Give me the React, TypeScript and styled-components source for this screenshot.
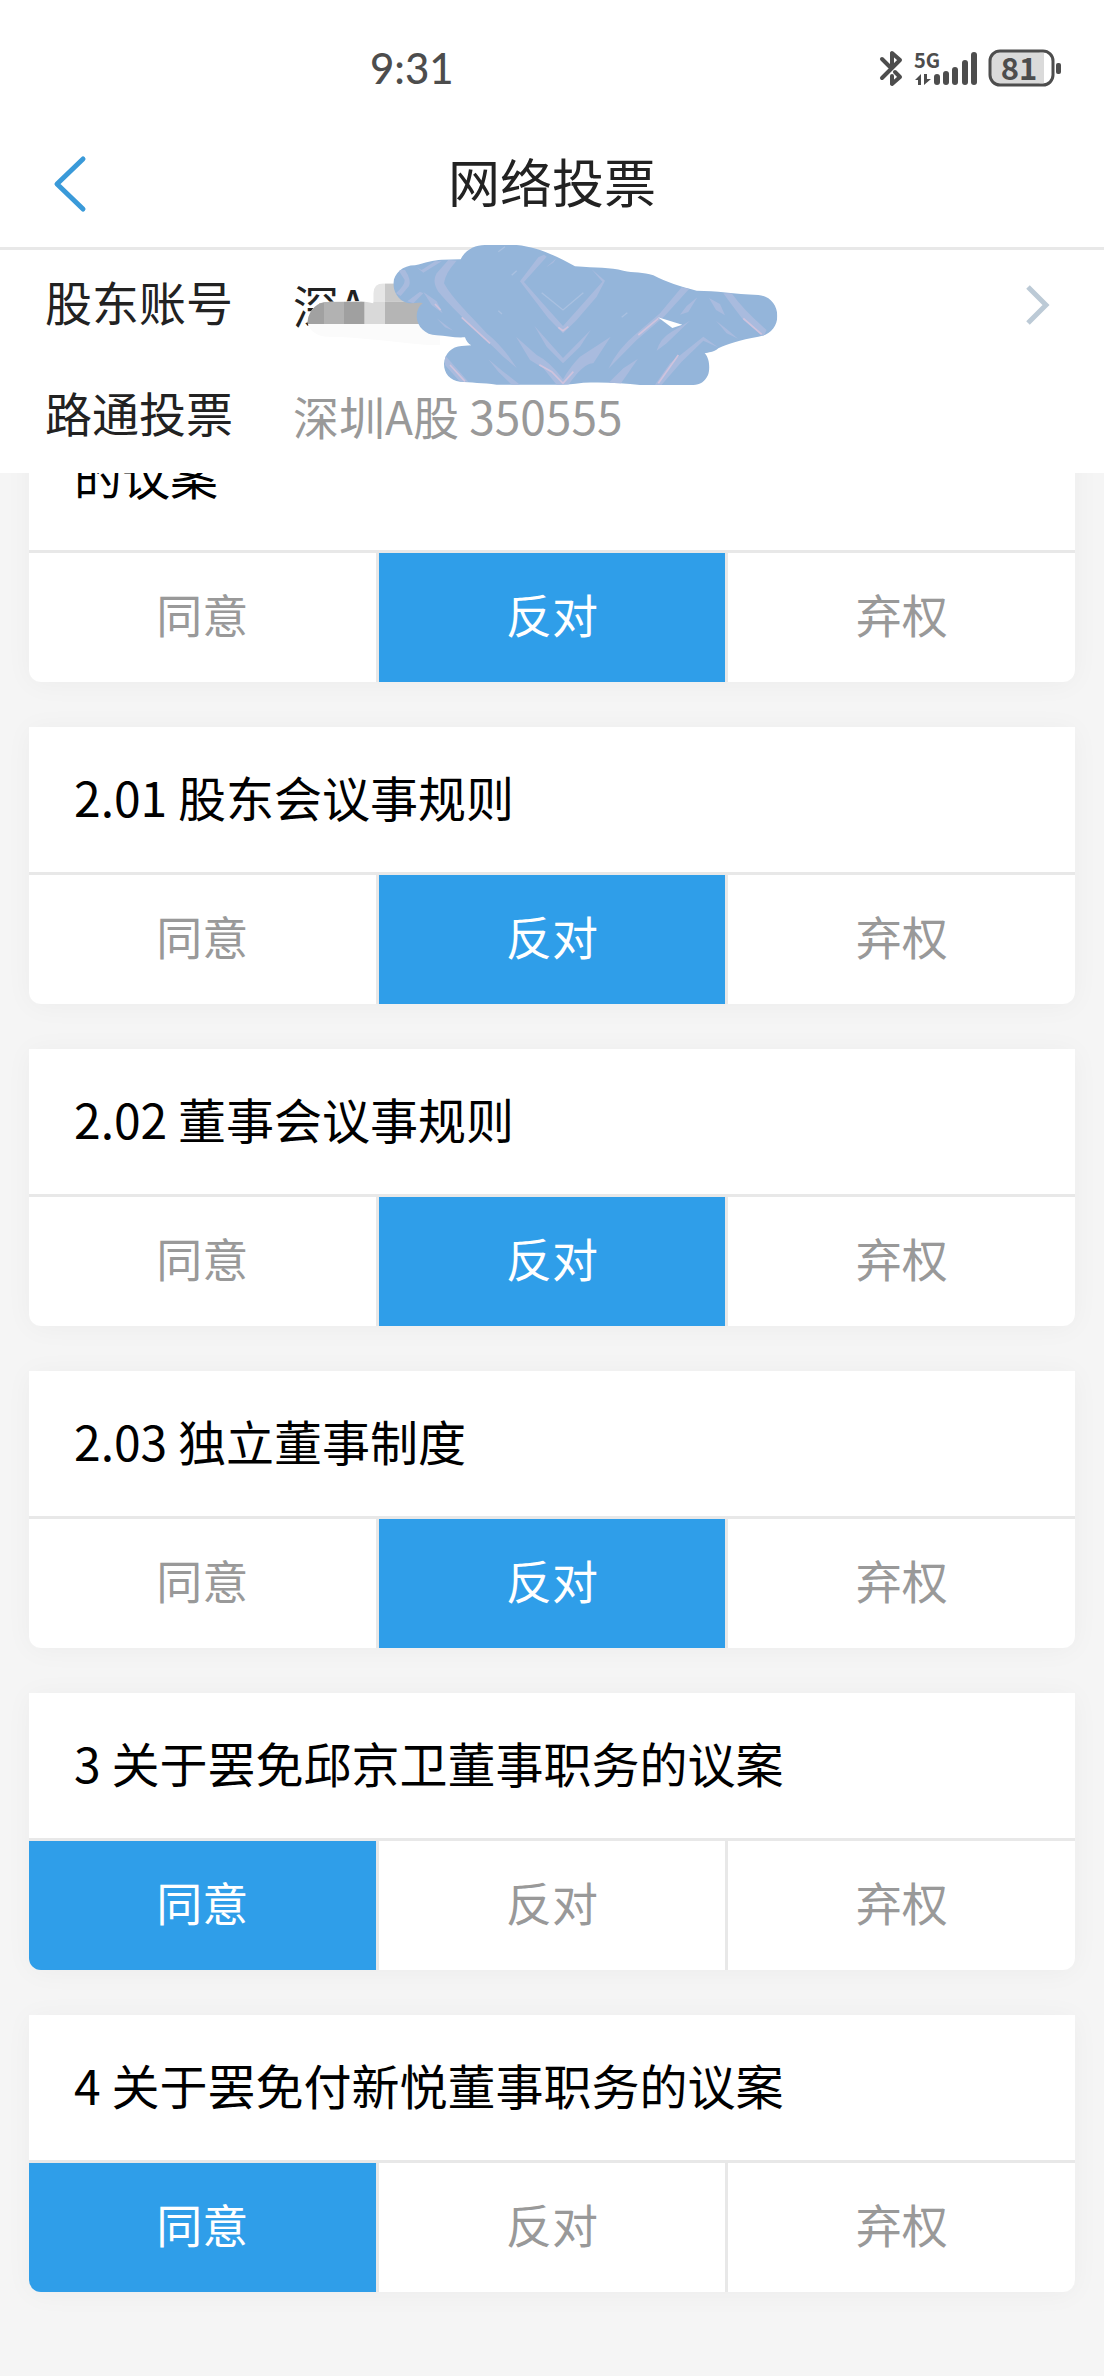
import { useState } from "react";
import styled, { createGlobalStyle } from "styled-components";

const GlobalStyle = createGlobalStyle`
  *, *::before, *::after { box-sizing: border-box; }
  body {
    margin: 0;
    background: #f5f5f5;
    color: #222;
    font-family: "Noto Sans CJK SC", "Noto Sans", sans-serif;
  }
  button { font-family: inherit; }
`;

const Page = styled.div`
  min-height: 100vh;
  padding-bottom: 84px;
`;

const Top = styled.header`
  position: sticky;
  top: 0;
  z-index: 1;
  background: #fff;
`;

const StatusBar = styled.div`
  display: flex;
  align-items: center;
  justify-content: space-between;
  height: 120px;
  padding: 16px 42px 0 370px;
  color: #4d4d4d;
`;

const Clock = styled.time`
  font-family: Lato, "Noto Sans", sans-serif;
  font-size: 42px;
  line-height: 48px;
  font-weight: 500;
`;

const StatusIcons = styled.div`
  display: flex;
  align-items: center;
  gap: 11px;
`;

const NavBar = styled.nav`
  display: grid;
  grid-template-columns: 140px 1fr 140px;
  align-items: center;
  height: 130px;
  border-bottom: 3px solid #e8e8e8;
`;

const BackButton = styled.button`
  display: flex;
  align-items: center;
  height: 100%;
  padding: 0 0 0 53px;
  border: 0;
  background: none;
`;

const Title = styled.h1`
  margin: 0;
  padding-bottom: 6px;
  font-size: 52px;
  line-height: 72px;
  font-weight: 400;
  text-align: center;
`;

const AccountPanel = styled.section`
  position: relative;
  padding-bottom: 1px;
`;

const AccountRow = styled.div`
  display: grid;
  grid-template-columns: 248px 1fr auto;
  align-items: center;
  width: 100%;
  height: 111px;
  padding: 0 54px 2px 45px;
  border: 0;
  background: none;
  color: #222;
  text-align: left;
  font-size: 47px;
  line-height: 72px;
`;

const Label = styled.span`
  padding-bottom: 8px;
`;

const Value = styled.span<{ $muted?: boolean }>`
  padding-bottom: 2px;
  font-size: 46px;
  color: ${(p) => (p.$muted ? "#999" : "#222")};
`;

const Redaction = styled.svg`
  position: absolute;
  top: -10px;
  left: 300px;
  pointer-events: none;
`;

const List = styled.main`
  display: flex;
  flex-direction: column;
  gap: 45px;
  margin-top: -68px;
  padding: 0 29px;
`;

const Card = styled.section`
  overflow: hidden;
  border-radius: 0 0 12px 12px;
  background: #fff;
  box-shadow: 0 2px 28px rgba(0, 0, 0, 0.04);
`;

const Proposal = styled.h2`
  margin: 0;
  padding: 33px 45px 40px;
  color: #000;
  font-size: 48px;
  line-height: 72px;
  font-weight: 400;
`;

const Choices = styled.div`
  display: grid;
  grid-template-columns: repeat(3, 1fr);
  gap: 3px;
  padding-top: 3px;
  background: #e8e8e8;
`;

const Choice = styled.button<{ $active: boolean }>`
  height: 129px;
  padding: 0 0 10px;
  border: 0;
  background: ${(p) => (p.$active ? "#2f9ee9" : "#fff")};
  color: ${(p) => (p.$active ? "#fff" : "#999")};
  font-size: 46px;
  line-height: 72px;
`;

const options = ["同意", "反对", "弃权"];

const proposals = [
  { title: "的议案", vote: 1 },
  { title: "2.01 股东会议事规则", vote: 1 },
  { title: "2.02 董事会议事规则", vote: 1 },
  { title: "2.03 独立董事制度", vote: 1 },
  { title: "3 关于罢免邱京卫董事职务的议案", vote: 0 },
  { title: "4 关于罢免付新悦董事职务的议案", vote: 0 },
];

function Bluetooth() {
  return (
    <svg width="24" height="38" viewBox="878 48 24 38" fill="none" stroke="#4d4d4d" strokeWidth="4" strokeLinecap="round" strokeLinejoin="round">
      <path d="M881 77 L899 59 L891 52 V66 M881 58 L890 67 M894 71 L899 76 L891 83 V75" />
    </svg>
  );
}

function Signal() {
  const bars = [
    [932, 73],
    [941, 70],
    [950, 66],
    [960, 59],
    [969, 51],
  ];
  return (
    <svg width="63" height="58" viewBox="912 38 63 58" fill="#4d4d4d">
      <text x="912" y="67" fontSize="20" fontWeight="700">5G</text>
      {bars.map(([x, y]) => (
        <rect key={x} x={x} y={y} width="6" height={84 - y} rx="3" />
      ))}
      <path d="M913 79 L919 73 V84 H916 V79 Z M922 73 H925 V78 H929 L922 84 Z" />
    </svg>
  );
}

function Battery() {
  return (
    <svg width="74" height="58" viewBox="987 38 74 58">
      <rect x="989" y="50" width="54" height="34" rx="9" fill="#dadada" />
      <rect x="1036" y="52" width="7" height="30" fill="#dadada" />
      <rect x="989" y="50" width="63" height="34" rx="10" fill="none" stroke="#4d4d4d" strokeWidth="3" />
      <rect x="1055" y="62" width="5" height="11" rx="2" fill="#4d4d4d" />
      <text x="1018" y="79" fontSize="31" fontWeight="700" fill="#4d4d4d" textAnchor="middle">81</text>
    </svg>
  );
}

function AccountMask() {
  return (
    <Redaction width="490" height="150" viewBox="300 240 490 150" aria-hidden="true">
      <defs>
        <clipPath id="mosaic">
          <path d="M922 245 C928 205 955 185 985 185 L1085 183 L1120 190 V160 Q1122 130 1150 130 H1240 L1320 200 V316 C1200 312 1100 290 980 290 Q930 285 922 245 Z" />
        </clipPath>
        <clipPath id="scribble">
          <path d="M70 160 C72 130 98 106 135 106 C165 98 190 90 215 89 L272 88 C285 60 315 45 345 45 H440 C500 50 560 78 615 109 C680 114 720 112 760 122 C790 130 820 124 850 136 C890 156 930 170 980 182 C1040 182 1090 192 1165 195 C1200 198 1222 225 1222 258 C1222 290 1200 316 1165 320 C1110 330 1070 342 1045 355 C1030 368 1015 367 1004 370 C1020 385 1020 420 1014 435 C1005 455 990 464 970 465 H810 C760 458 700 456 640 458 C600 464 560 465 520 464 H380 C340 458 300 458 270 455 C240 452 222 430 222 402 C224 370 245 350 275 348 L304 346 C295 342 288 332 285 322 C255 324 230 318 200 316 C165 314 142 290 140 260 C140 245 146 228 158 220 C145 216 130 222 110 218 C85 212 70 185 70 160 Z" />
        </clipPath>
      </defs>
      <g transform="translate(0 240) scale(0.33333)">
        <g clipPath="url(#mosaic)">
          <rect x="910" y="120" width="420" height="200" fill="#fbfbfb" />
          <rect x="1120" y="130" width="35" height="55" fill="#e6e6e6" />
          <rect x="1155" y="130" width="90" height="55" fill="#c9c9c9" />
          <rect x="910" y="185" width="62" height="67" fill="#a1a1a1" />
          <rect x="972" y="185" width="60" height="67" fill="#b2b2b2" />
          <rect x="1032" y="185" width="62" height="67" fill="#a0a0a0" />
          <rect x="1094" y="185" width="61" height="67" fill="#d9d9d9" />
          <rect x="1155" y="185" width="175" height="67" fill="#b5b5b5" />
        </g>
      </g>
      <g transform="translate(370 230) scale(0.33333)" clipPath="url(#scribble)">
        <rect x="60" y="40" width="1170" height="430" fill="#94b5da" />
        <g fill="#a9bbde">
          <path d="M235 90 L260 92 Q225 130 222 160 C250 210 300 255 350 310 Q400 350 440 414 L400 380 C340 320 260 250 205 185 Q185 155 200 130 Z" />
          <path d="M85 120 H105 Q125 150 117 168 L92 198 L78 190 Q105 165 104 150 Z" />
          <path d="M140 112 L155 120 L195 94 H215 L160 128 Z M112 214 L150 185 L160 190 L130 220 Z" />
          <path d="M160 186 L200 214 L218 250 L185 225 Z M200 265 L250 302 L225 292 Z" />
          <path d="M505 82 L522 74 L530 80 L462 156 L520 222 L579 288 L640 220 L697 155 L665 118 L705 152 L680 200 L620 270 L579 310 L535 265 L450 154 Z" />
          <path d="M528 112 L560 84 L550 98 Z M493 287 L579 384 L662 300 L630 350 L579 400 L530 350 Z" />
          <path d="M438 320 L500 375 Q540 395 579 448 Q600 410 630 380 L722 320 L670 400 Q640 400 596 464 H560 L520 415 L480 390 Z" />
          <path d="M935 172 L958 176 Q900 240 880 262 L800 330 L715 416 Q745 355 800 310 L870 250 Z" />
          <path d="M982 202 L955 246 L930 254 L950 228 Z M1017 204 L1050 222 L1065 256 L1038 240 Z" />
          <path d="M1060 190 H1085 Q1120 240 1190 300 L1180 320 L1120 270 Q1085 225 1060 190 Z" />
          <path d="M960 272 L890 340 L860 362 Q870 325 905 305 Z M1038 272 L1070 297 L1104 326 L1070 310 Z" />
          <path d="M355 388 L400 425 L450 464 H425 L385 425 Z M804 386 L750 464 H710 L760 415 Z" />
          <path d="M1000 320 L1044 352 L1000 332 L935 395 L875 464 H855 L900 400 Z M225 376 L295 455 H270 L225 405 Z" />
        </g>
        <g fill="none" stroke="#cfc3dd" strokeWidth="5">
          <path d="M275 262 L360 340 M240 405 L285 454 M1120 265 L1175 313 M865 265 L805 315 M925 375 L865 460" />
          <path d="M508 404 L545 425 L579 460 L610 425 M565 292 L579 302 L595 290 M195 222 L212 240" />
          <path d="M515 188 L579 240 L640 188 M385 65 L405 50 M425 136 L440 122 M385 242 L396 252 M755 262 L772 248" stroke="#a9c0e0" strokeWidth="4" />
        </g>
        <path d="M864 262 L937 284 L907 294 Z" fill="#fff" />
      </g>
    </Redaction>
  );
}

export default function App() {
  const [votes, setVotes] = useState(proposals.map((p) => p.vote));

  return (
    <>
      <GlobalStyle />
      <Page>
        <Top>
          <StatusBar>
            <Clock>9:31</Clock>
            <StatusIcons>
              <Bluetooth />
              <Signal />
              <Battery />
            </StatusIcons>
          </StatusBar>
          <NavBar>
            <BackButton aria-label="返回">
              <svg width="34" height="58" viewBox="0 0 34 58" fill="none" stroke="#3a9ad9" strokeWidth="5" strokeLinecap="round" strokeLinejoin="round">
                <path d="M30 4 L4 29 L30 54" />
              </svg>
            </BackButton>
            <Title>网络投票</Title>
          </NavBar>
          <AccountPanel>
            <AccountRow as="button">
              <Label>股东账号</Label>
              <Value>深A</Value>
              <svg width="24" height="42" viewBox="0 0 24 42" fill="none" stroke="#bccad6" strokeWidth="5">
                <path d="M2 3 L20 21 L2 39" />
              </svg>
            </AccountRow>
            <AccountRow>
              <Label>路通投票</Label>
              <Value $muted>深圳A股 350555</Value>
            </AccountRow>
            <AccountMask />
          </AccountPanel>
        </Top>
        <List>
          {proposals.map((proposal, row) => (
            <Card key={proposal.title}>
              <Proposal>{proposal.title}</Proposal>
              <Choices role="group" aria-label={proposal.title}>
                {options.map((option, i) => (
                  <Choice
                    key={option}
                    $active={votes[row] === i}
                    aria-pressed={votes[row] === i}
                    onClick={() => setVotes(votes.map((v, r) => (r === row ? i : v)))}
                  >
                    {option}
                  </Choice>
                ))}
              </Choices>
            </Card>
          ))}
        </List>
      </Page>
    </>
  );
}
